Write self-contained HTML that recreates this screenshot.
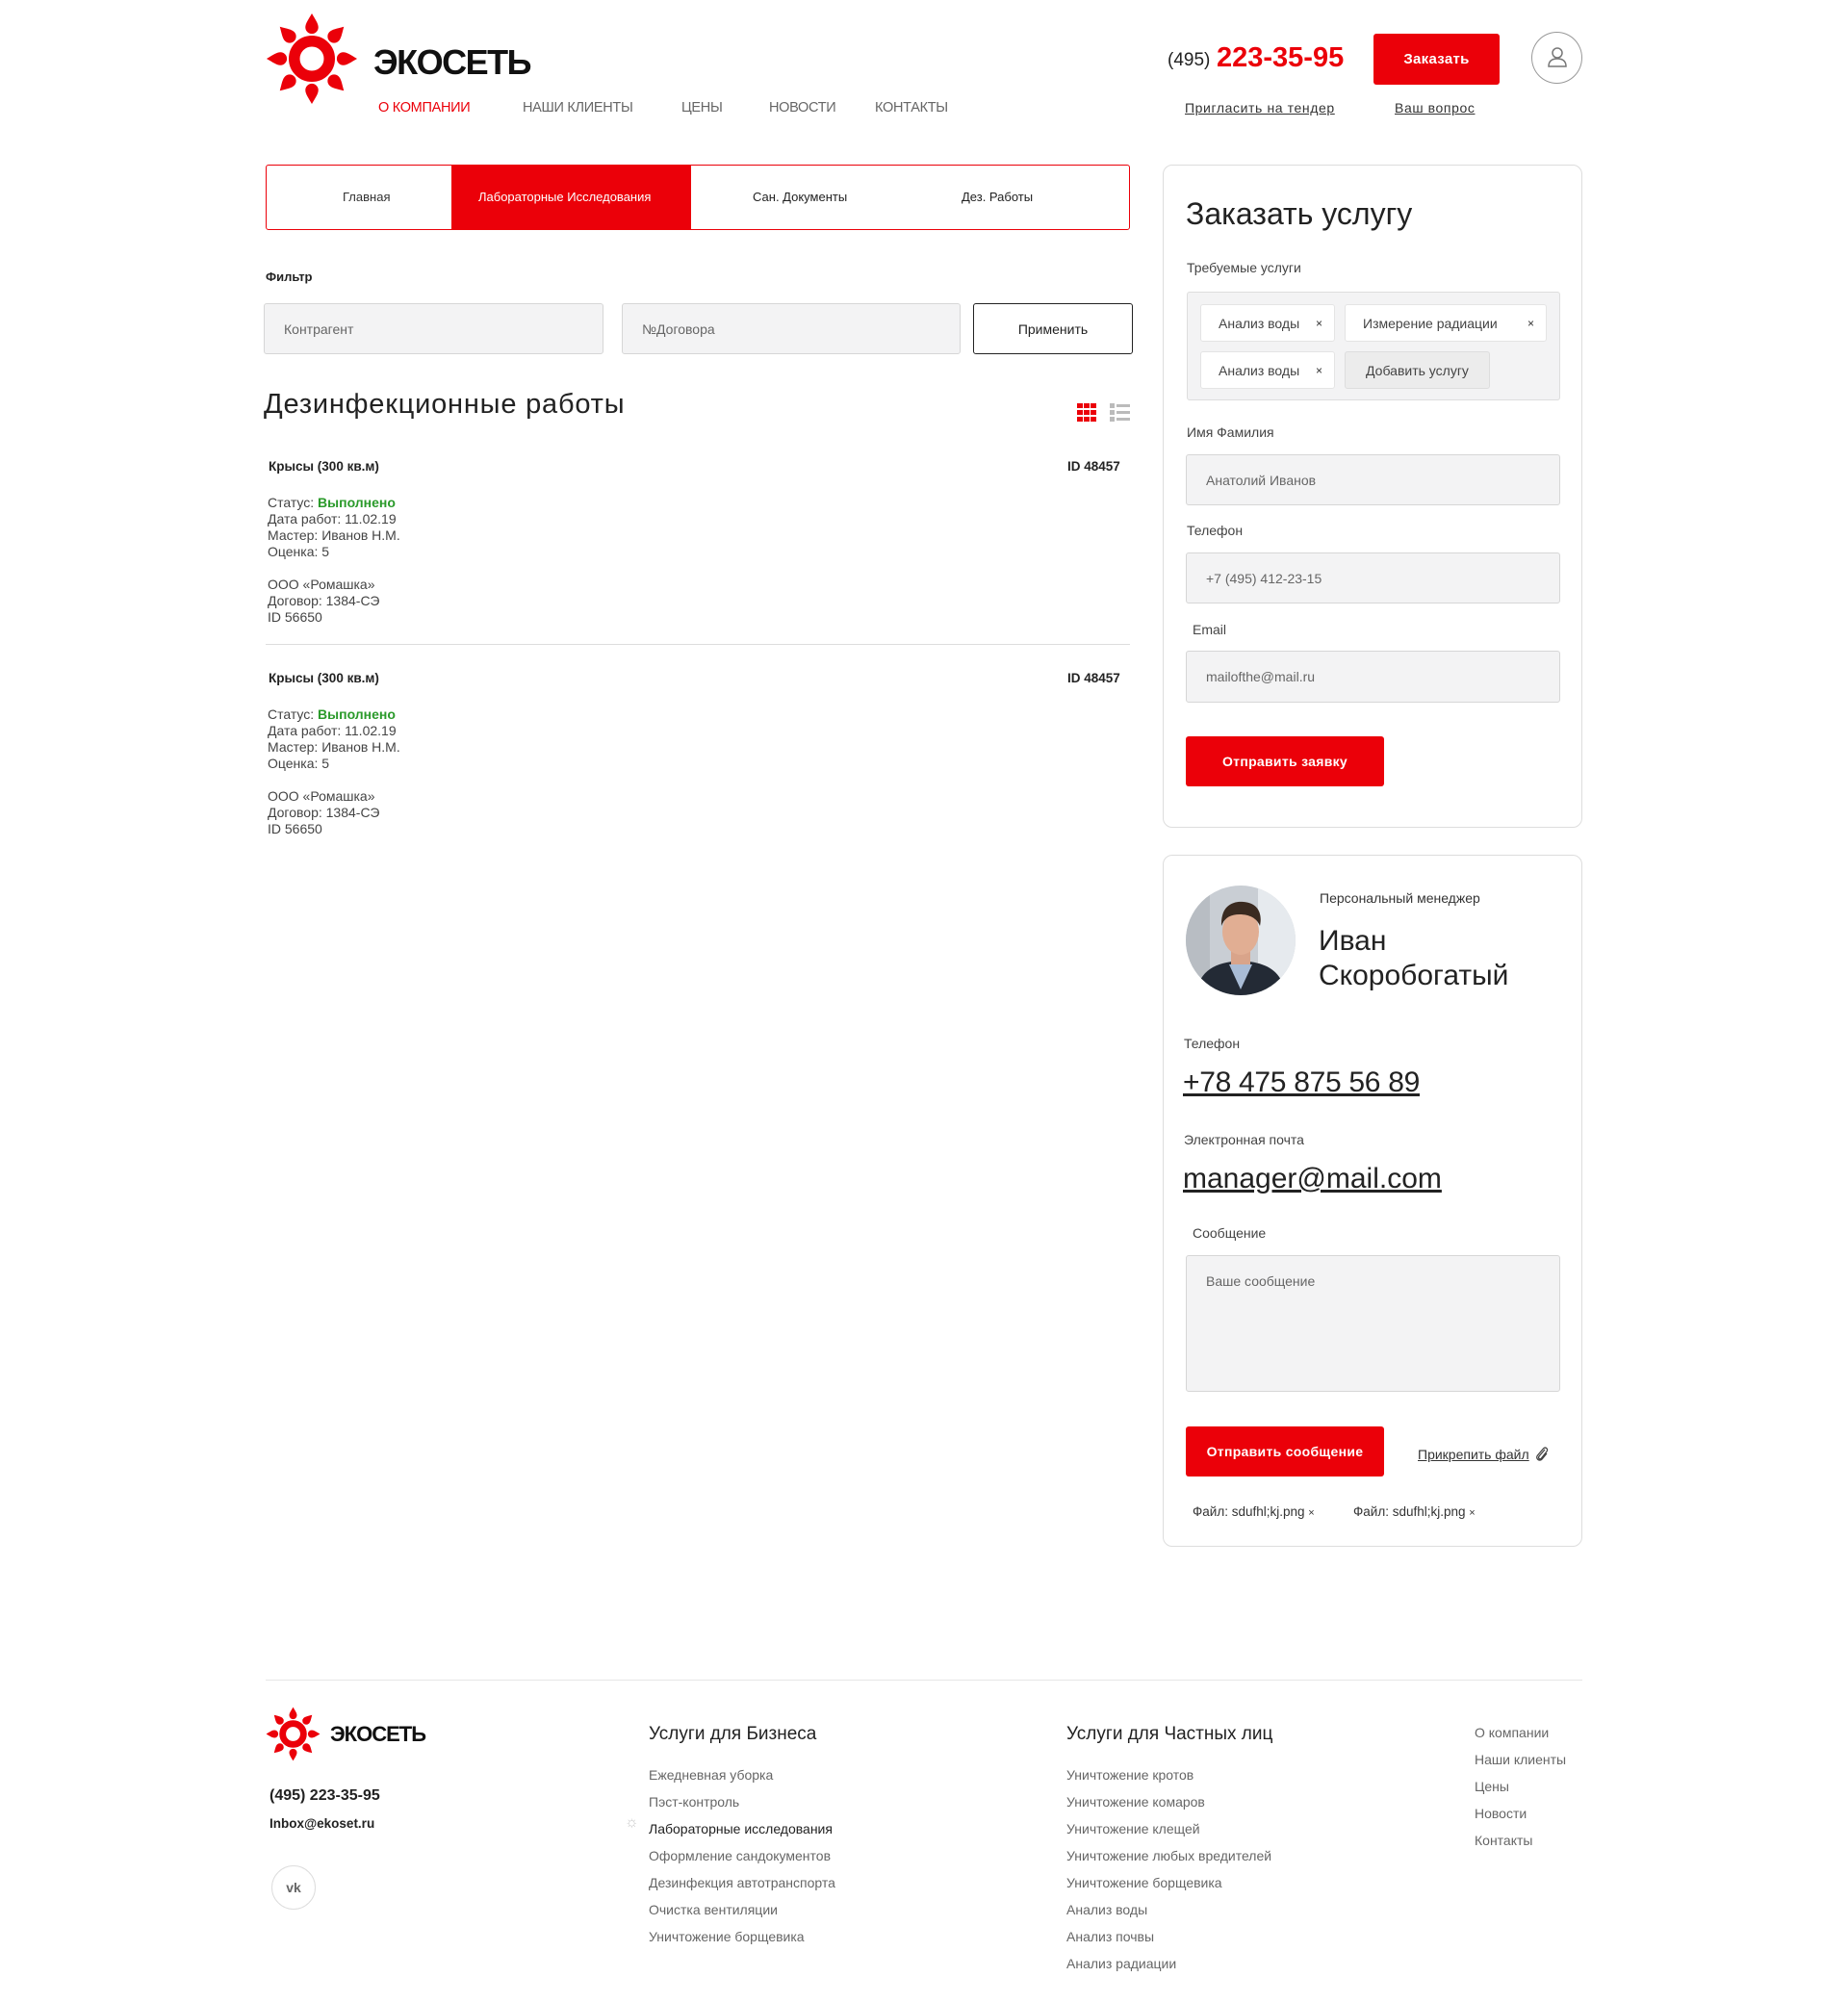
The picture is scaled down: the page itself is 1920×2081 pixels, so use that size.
<!DOCTYPE html>
<html><head><meta charset="utf-8"><style>
*{margin:0;padding:0;box-sizing:border-box}
body{width:1920px;height:2081px;position:relative;background:#fff;font-family:"Liberation Sans",sans-serif;color:#222;overflow:hidden}
.a{position:absolute;white-space:nowrap}
.red{color:#eb0009}
.btn{position:absolute;background:#eb0009;color:#fff;border-radius:3px;font-weight:bold;font-size:15px;display:flex;align-items:center;justify-content:center;letter-spacing:.3px}
.inp{position:absolute;background:#f3f3f4;border:1px solid #d6d6d6;border-radius:3px;color:#666;font-size:14px;display:flex;align-items:center;padding-left:20px}
.card{position:absolute;border:1.5px solid #ddd;border-radius:10px}
.lbl{position:absolute;font-size:14px;color:#444;white-space:nowrap}
.chip{position:absolute;background:#fff;border:1px solid #e4e4e4;border-radius:3px;font-size:14px;color:#444;display:flex;align-items:center;padding-left:18px}
.chip i{position:absolute;right:12px;font-style:normal;font-size:12px;color:#333}
.nav{position:absolute;top:104px;font-size:14.5px;color:#666;letter-spacing:-.3px}
.ft{position:absolute;font-size:14px;color:#666;white-space:nowrap}
.u{text-decoration:underline}
</style></head><body>

<svg class="a" style="left:276px;top:13px" width="96" height="96" viewBox="-50 -50 100 100">
<circle r="19" fill="none" stroke="#eb0009" stroke-width="12"/>
<g fill="#eb0009">
<path id="p" d="M0,-49 C4,-42 7,-38 7,-34 A7,7 0 0 1 -7,-34 C-7,-38 -4,-42 0,-49Z"/>
<use href="#p" transform="rotate(45)"/><use href="#p" transform="rotate(90)"/><use href="#p" transform="rotate(135)"/><use href="#p" transform="rotate(180)"/><use href="#p" transform="rotate(225)"/><use href="#p" transform="rotate(270)"/><use href="#p" transform="rotate(315)"/>
</g></svg>
<div class="a" style="left:388px;top:44px;font-size:36px;font-weight:bold;letter-spacing:-1.5px;color:#111">ЭКОСЕТЬ</div>

<div class="nav" style="left:393px;color:#eb0009">О КОМПАНИИ</div>
<div class="nav" style="left:543px">НАШИ КЛИЕНТЫ</div>
<div class="nav" style="left:708px">ЦЕНЫ</div>
<div class="nav" style="left:799px">НОВОСТИ</div>
<div class="nav" style="left:909px">КОНТАКТЫ</div>

<div class="a" style="left:1213px;top:52px;font-size:19px;color:#222">(495)</div>
<div class="a red" style="left:1264px;top:44px;font-size:29px;font-weight:bold">223-35-95</div>
<div class="btn" style="left:1427px;top:35px;width:131px;height:53px">Заказать</div>
<div class="a" style="left:1591px;top:33px;width:53px;height:54px;border:1.5px solid #999;border-radius:50%"></div>
<svg class="a" style="left:1605px;top:47px" width="26" height="26" viewBox="0 0 26 26" fill="none" stroke="#777" stroke-width="1.5"><circle cx="13" cy="8" r="5"/><path d="M4,22 C4,16 8,14 13,14 C18,14 22,16 22,22 Z"/></svg>
<div class="a u" style="left:1231px;top:104px;font-size:14px;color:#333;letter-spacing:.6px">Пригласить на тендер</div>
<div class="a u" style="left:1449px;top:104px;font-size:14px;color:#333;letter-spacing:.6px">Ваш вопрос</div>

<div class="a" style="left:276px;top:171px;width:898px;height:68px;border:1.5px solid #eb0009;border-radius:3px"></div>
<div class="a" style="left:469px;top:171px;width:249px;height:68px;background:#eb0009"></div>
<div class="a" style="left:356px;top:197px;font-size:13px;color:#333">Главная</div>
<div class="a" style="left:497px;top:197px;font-size:13px;color:#fff">Лабораторные Исследования</div>
<div class="a" style="left:782px;top:197px;font-size:13px;color:#222">Сан. Документы</div>
<div class="a" style="left:999px;top:197px;font-size:13px;color:#222">Дез. Работы</div>

<div class="a" style="left:276px;top:280px;font-size:13px;font-weight:bold">Фильтр</div>
<div class="inp" style="left:274px;top:315px;width:353px;height:53px">Контрагент</div>
<div class="inp" style="left:646px;top:315px;width:352px;height:53px">№Договора</div>
<div class="a" style="left:1011px;top:315px;width:166px;height:53px;border:1.5px solid #222;border-radius:3px;display:flex;align-items:center;justify-content:center;font-size:14px">Применить</div>

<div class="a" style="left:274px;top:404px;font-size:29px;color:#222;letter-spacing:.8px">Дезинфекционные работы</div>
<svg class="a" style="left:1119px;top:419px" width="58" height="21">
<g fill="#eb0009"><rect x="0" y="0" width="6" height="5"/><rect x="7" y="0" width="6" height="5"/><rect x="14" y="0" width="6" height="5"/><rect x="0" y="7" width="6" height="5"/><rect x="7" y="7" width="6" height="5"/><rect x="14" y="7" width="6" height="5"/><rect x="0" y="14" width="6" height="5"/><rect x="7" y="14" width="6" height="5"/><rect x="14" y="14" width="6" height="5"/></g>
<g fill="#bbb"><rect x="34" y="0" width="5" height="5"/><rect x="41" y="1" width="14" height="3"/><rect x="34" y="7" width="5" height="5"/><rect x="41" y="8" width="14" height="3"/><rect x="34" y="14" width="5" height="5"/><rect x="41" y="15" width="14" height="3"/></g></svg>

<div class="a" style="left:279px;top:477px;font-size:13.5px;font-weight:bold">Крысы (300 кв.м)</div>
<div class="a" style="left:1109px;top:477px;font-size:13.5px;font-weight:bold">ID 48457</div>
<div class="a" style="left:278px;top:514px;font-size:14px;line-height:17px;color:#444">Статус: <b style="color:#2a9a2a">Выполнено</b><br>Дата работ: 11.02.19<br>Мастер: Иванов Н.М.<br>Оценка: 5<br><br>ООО «Ромашка»<br>Договор: 1384-СЭ<br>ID 56650</div>
<div class="a" style="left:276px;top:669px;width:898px;height:1px;background:#ddd"></div>
<div class="a" style="left:279px;top:697px;font-size:13.5px;font-weight:bold">Крысы (300 кв.м)</div>
<div class="a" style="left:1109px;top:697px;font-size:13.5px;font-weight:bold">ID 48457</div>
<div class="a" style="left:278px;top:734px;font-size:14px;line-height:17px;color:#444">Статус: <b style="color:#2a9a2a">Выполнено</b><br>Дата работ: 11.02.19<br>Мастер: Иванов Н.М.<br>Оценка: 5<br><br>ООО «Ромашка»<br>Договор: 1384-СЭ<br>ID 56650</div>

<!-- order card -->
<div class="card" style="left:1208px;top:171px;width:436px;height:689px"></div>
<div class="a" style="left:1232px;top:204px;font-size:32px;color:#222">Заказать услугу</div>
<div class="lbl" style="left:1233px;top:270px">Требуемые услуги</div>
<div class="a" style="left:1233px;top:303px;width:388px;height:113px;background:#f3f3f4;border:1px solid #ddd;border-radius:3px"></div>
<div class="chip" style="left:1247px;top:316px;width:140px;height:39px">Анализ воды<i>×</i></div>
<div class="chip" style="left:1397px;top:316px;width:210px;height:39px">Измерение радиации<i>×</i></div>
<div class="chip" style="left:1247px;top:365px;width:140px;height:39px">Анализ воды<i>×</i></div>
<div class="chip" style="left:1397px;top:365px;width:151px;height:39px;background:#ececec;border-color:#ddd;justify-content:center;padding:0">Добавить услугу</div>
<div class="lbl" style="left:1233px;top:441px">Имя Фамилия</div>
<div class="inp" style="left:1232px;top:472px;width:389px;height:53px">Анатолий Иванов</div>
<div class="lbl" style="left:1233px;top:543px">Телефон</div>
<div class="inp" style="left:1232px;top:574px;width:389px;height:53px">+7 (495) 412-23-15</div>
<div class="lbl" style="left:1239px;top:646px">Email</div>
<div class="inp" style="left:1232px;top:676px;width:389px;height:54px">mailofthe@mail.ru</div>
<div class="btn" style="left:1232px;top:765px;width:206px;height:52px;font-size:14px">Отправить заявку</div>

<!-- manager card -->
<div class="card" style="left:1208px;top:888px;width:436px;height:719px"></div>
<svg class="a" style="left:1232px;top:920px" width="114" height="114" viewBox="0 0 114 114">
<defs><clipPath id="c"><circle cx="57" cy="57" r="57"/></clipPath></defs>
<g clip-path="url(#c)"><rect width="114" height="114" fill="#c9ced4"/><rect x="75" y="0" width="39" height="114" fill="#e6eaee"/><rect x="0" y="0" width="25" height="114" fill="#b8bdc3"/>
<path d="M10,114 C14,88 30,80 57,78 C84,80 100,88 104,114Z" fill="#232a35"/><path d="M45,82 L57,108 L69,82Z" fill="#a9bcd6"/>
<rect x="47" y="62" width="20" height="20" fill="#d9a48a"/><ellipse cx="57" cy="48" rx="19" ry="24" fill="#e1ae93"/><path d="M37,42 C36,20 50,16 60,17 C74,18 80,28 77,42 C74,34 66,30 56,30 C46,30 40,34 37,42Z" fill="#3a2a20"/></g></svg>
<div class="a" style="left:1371px;top:925px;font-size:14px;color:#333">Персональный менеджер</div>
<div class="a" style="left:1370px;top:960px;font-size:30px;line-height:36px;color:#222">Иван<br>Скоробогатый</div>
<div class="lbl" style="left:1230px;top:1076px">Телефон</div>
<div class="a u" style="left:1229px;top:1108px;font-size:30px;color:#222;letter-spacing:-.3px">+78 475 875 56 89</div>
<div class="lbl" style="left:1230px;top:1176px">Электронная почта</div>
<div class="a u" style="left:1229px;top:1208px;font-size:30px;color:#222">manager@mail.com</div>
<div class="lbl" style="left:1239px;top:1273px">Сообщение</div>
<div class="inp" style="left:1232px;top:1304px;width:389px;height:142px;align-items:flex-start;padding-top:18px">Ваше сообщение</div>
<div class="btn" style="left:1232px;top:1482px;width:206px;height:52px;font-size:14px">Отправить сообщение</div>
<div class="a u" style="left:1473px;top:1503px;font-size:14px;color:#333">Прикрепить файл</div>
<svg class="a" style="left:1594px;top:1502px" width="16" height="18" viewBox="0 0 16 18" fill="none" stroke="#444" stroke-width="1.3"><path d="M11,4 L5,11 C3.5,13 6,15 7.5,13 L13,6 C15,3.5 11.5,0.5 9.5,3 L3.5,10 C1,13 5,17 8,14 L13,8"/></svg>
<div class="a" style="left:1239px;top:1563px;font-size:13.5px;color:#333">Файл: sdufhl;kj.png <span style="font-size:11px">×</span></div>
<div class="a" style="left:1406px;top:1563px;font-size:13.5px;color:#333">Файл: sdufhl;kj.png <span style="font-size:11px">×</span></div>

<!-- footer -->
<div class="a" style="left:276px;top:1745px;width:1368px;height:1px;background:#e6e6e6"></div>
<svg class="a" style="left:276px;top:1773px" width="57" height="57" viewBox="-50 -50 100 100">
<circle r="19" fill="none" stroke="#eb0009" stroke-width="12"/>
<g fill="#eb0009"><path id="q" d="M0,-49 C4,-42 7,-38 7,-34 A7,7 0 0 1 -7,-34 C-7,-38 -4,-42 0,-49Z"/>
<use href="#q" transform="rotate(45)"/><use href="#q" transform="rotate(90)"/><use href="#q" transform="rotate(135)"/><use href="#q" transform="rotate(180)"/><use href="#q" transform="rotate(225)"/><use href="#q" transform="rotate(270)"/><use href="#q" transform="rotate(315)"/></g></svg>
<div class="a" style="left:343px;top:1789px;font-size:22px;font-weight:bold;letter-spacing:-1px;color:#111">ЭКОСЕТЬ</div>
<div class="a" style="left:280px;top:1857px;font-size:16px;font-weight:bold;color:#222">(495) 223-35-95</div>
<div class="a" style="left:280px;top:1887px;font-size:13.5px;font-weight:bold;color:#222">Inbox@ekoset.ru</div>
<div class="a" style="left:282px;top:1938px;width:46px;height:46px;border:1px solid #ddd;border-radius:50%;display:flex;align-items:center;justify-content:center;font-size:14px;font-weight:bold;color:#666">vk</div>

<div class="a" style="left:674px;top:1791px;font-size:19px;color:#222">Услуги для Бизнеса</div>
<div class="ft" style="left:674px;top:1830px;line-height:28px">Ежедневная уборка<br>Пэст-контроль<br><span style="color:#222">Лабораторные исследования</span><br>Оформление сандокументов<br>Дезинфекция автотранспорта<br>Очистка вентиляции<br>Уничтожение борщевика</div>
<div class="a" style="left:649px;top:1885px;font-size:16px;color:#ccc">☼</div>

<div class="a" style="left:1108px;top:1791px;font-size:19px;color:#222">Услуги для Частных лиц</div>
<div class="ft" style="left:1108px;top:1830px;line-height:28px">Уничтожение кротов<br>Уничтожение комаров<br>Уничтожение клещей<br>Уничтожение любых вредителей<br>Уничтожение борщевика<br>Анализ воды<br>Анализ почвы<br>Анализ радиации</div>

<div class="ft" style="left:1532px;top:1786px;line-height:28px">О компании<br>Наши клиенты<br>Цены<br>Новости<br>Контакты</div>
</body></html>
